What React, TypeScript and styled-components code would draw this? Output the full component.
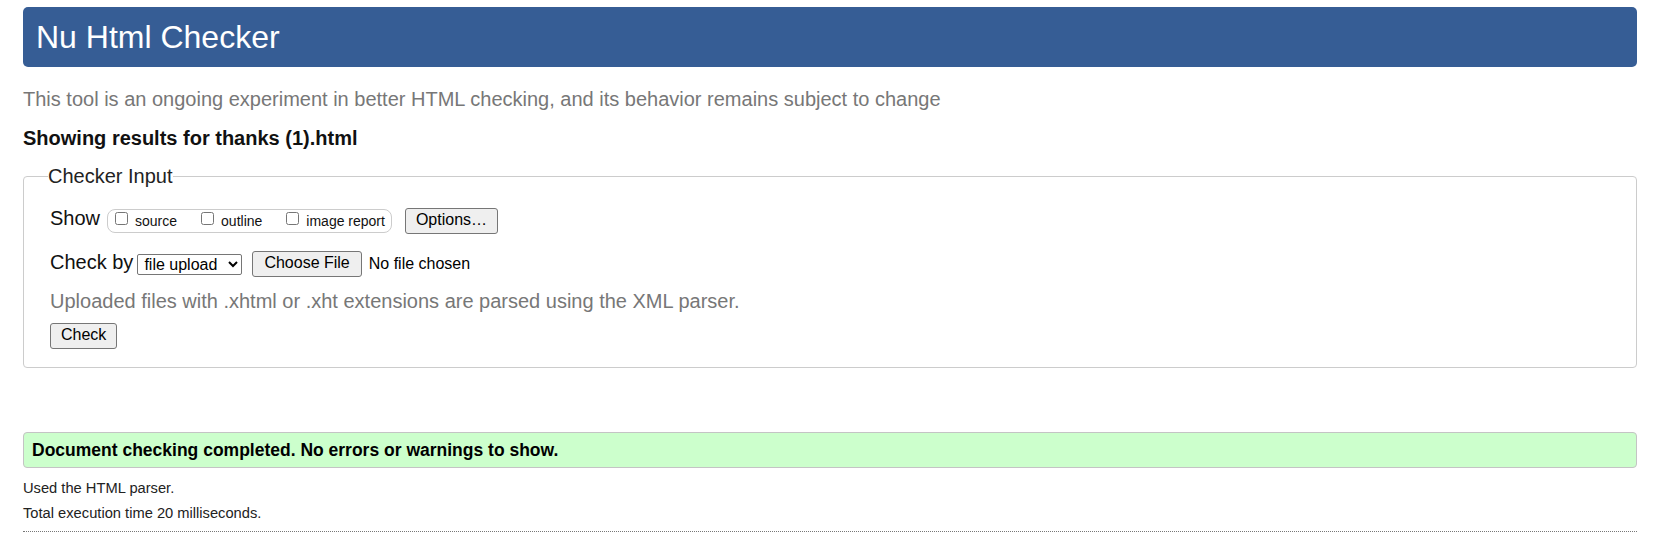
import React from "react";
import styled, { createGlobalStyle } from "styled-components";

const GlobalStyle = createGlobalStyle`
  html, body { margin: 0; padding: 0; background: #fff; }
  body { font-family: "Liberation Sans", Arial, Helvetica, sans-serif; color: #000; }
`;

const Page = styled.div`
  display: flex;
  flex-direction: column;
  padding: 7px 24px 0 23px;
`;

const Banner = styled.h1`
  margin: 0;
  height: 60px;
  display: flex;
  align-items: center;
  padding: 0 0 0 13px;
  background: #365d95;
  color: #fff;
  border-radius: 5px;
  font-size: 32px;
  font-weight: normal;
  line-height: 1;
`;

const Subtitle = styled.p`
  margin: 20px 0 0;
  font-size: 20px;
  line-height: 24px;
  color: #777;
`;

const ResultsHeading = styled.h2`
  margin: 15px 0 0;
  font-size: 20px;
  line-height: 24px;
  font-weight: bold;
  color: #111;
`;

const InputFieldset = styled.fieldset`
  margin: 14px 0 0;
  padding: 0 26px 18px;
  min-width: 0;
  border: 1px solid #ccc;
  border-radius: 4px;
  display: flex;
  flex-direction: column;
  align-items: flex-start;
`;

const Legend = styled.legend`
  padding: 0;
  margin-left: -2px;
  font-size: 20px;
  line-height: 24px;
  color: #222;
`;

const ControlRow = styled.div<{ $top: number }>`
  display: flex;
  align-items: center;
  height: 26px;
  margin-top: ${(p) => p.$top}px;
`;

const RowLabel = styled.span<{ $lift: number }>`
  font-size: 20px;
  line-height: 24px;
  color: #111;
  margin-bottom: ${(p) => p.$lift}px;
`;

const OptionPill = styled.span`
  display: inline-flex;
  align-items: center;
  box-sizing: border-box;
  height: 24px;
  margin-left: 7px;
  padding: 0 6px 0 7px;
  border: 1px solid #ccc;
  border-radius: 8px;
  gap: 24px;
`;

const OptionItem = styled.label`
  display: inline-flex;
  align-items: center;
  font-size: 14px;
  line-height: 16px;
  color: #111;
`;

const Tick = styled.input`
  width: 13px;
  height: 13px;
  margin: 0 7px 6px 0;
`;

const PushButton = styled.button<{ $left?: number; $pad?: number }>`
  box-sizing: border-box;
  height: 26px;
  margin-left: ${(p) => p.$left ?? 0}px;
  padding: 0 ${(p) => p.$pad ?? 10}px 3px;
  font-family: inherit;
  font-size: 16px;
  line-height: 18px;
  color: #000;
  background: #efefef;
  border: 1px solid #767676;
  border-radius: 3px;
`;

const ModeSelect = styled.select`
  box-sizing: border-box;
  width: 105px;
  height: 21px;
  margin-left: 4px;
  padding: 0 0 0 2px;
  font-family: inherit;
  font-size: 16px;
  color: #000;
  background: #fff;
  border: 1px solid #767676;
  border-radius: 2px;
`;

const FileStatus = styled.span`
  margin-left: 7px;
  font-size: 16px;
  line-height: 18px;
  color: #000;
`;

const Hint = styled.p`
  margin: 12px 0 0;
  font-size: 20px;
  line-height: 24px;
  color: #777;
`;

const SubmitButton = styled(PushButton)`
  margin-top: 10px;
`;

const SuccessBox = styled.p`
  margin: 64px 0 0;
  padding: 6px 8px;
  font-size: 17.5px;
  line-height: 22px;
  font-weight: bold;
  color: #000;
  background: #ccffcc;
  border: 1px solid #c4c4c4;
  border-radius: 4px;
`;

const Note = styled.p<{ $top: number }>`
  margin: ${(p) => p.$top}px 0 0;
  font-size: 14.7px;
  line-height: 18px;
  color: #222;
`;

const DottedRule = styled.div`
  margin-top: 9px;
  border-top: 1px dotted #777;
`;

export default function App() {
  return (
    <>
      <GlobalStyle />
      <Page>
        <Banner>Nu Html Checker</Banner>
        <Subtitle>
          This tool is an ongoing experiment in better HTML checking, and its behavior remains subject to change
        </Subtitle>
        <ResultsHeading>Showing results for thanks (1).html</ResultsHeading>
        <InputFieldset>
          <Legend>Checker Input</Legend>
          <ControlRow $top={20}>
            <RowLabel $lift={6}>Show</RowLabel>
            <OptionPill>
              <OptionItem>
                <Tick type="checkbox" />
                source
              </OptionItem>
              <OptionItem>
                <Tick type="checkbox" />
                outline
              </OptionItem>
              <OptionItem>
                <Tick type="checkbox" />
                image report
              </OptionItem>
            </OptionPill>
            <PushButton type="button" $left={13}>
              Options…
            </PushButton>
          </ControlRow>
          <ControlRow $top={17}>
            <RowLabel $lift={4}>Check by</RowLabel>
            <ModeSelect defaultValue="file">
              <option value="address">address</option>
              <option value="file">file upload</option>
              <option value="text">text input</option>
            </ModeSelect>
            <PushButton type="button" $left={10} $pad={11}>
              Choose File
            </PushButton>
            <FileStatus>No file chosen</FileStatus>
          </ControlRow>
          <Hint>Uploaded files with .xhtml or .xht extensions are parsed using the XML parser.</Hint>
          <SubmitButton type="button">Check</SubmitButton>
        </InputFieldset>
        <SuccessBox>Document checking completed. No errors or warnings to show.</SuccessBox>
        <Note $top={11}>Used the HTML parser.</Note>
        <Note $top={7}>Total execution time 20 milliseconds.</Note>
        <DottedRule />
      </Page>
    </>
  );
}
